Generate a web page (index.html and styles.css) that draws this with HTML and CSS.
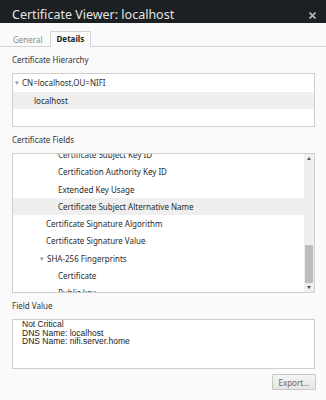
FILE: index.html
```html
<!DOCTYPE html>
<html>
<head>
<meta charset="utf-8">
<link rel="stylesheet" href="styles.css">
</head>
<body>
<div class="dialog">
  <div class="titlebar">
    <span class="title">Certificate Viewer: localhost</span>
    <span class="close">
      <svg width="7" height="7" viewBox="0 0 7 7"><path d="M0.5 0.5 L6.5 6.5 M6.5 0.5 L0.5 6.5" stroke="#b8b8b8" stroke-width="1.6"/></svg>
    </span>
  </div>
  <div class="tabs">
    <span class="tab">General</span>
    <span class="tab active">Details</span>
  </div>
  <div class="content">
    <div class="label">Certificate Hierarchy</div>
    <div class="box hierarchy">
      <div class="row"><span class="tri">▾</span>CN=localhost,OU=NIFI</div>
      <div class="row sel ind2">localhost</div>
    </div>
    <div class="label">Certificate Fields</div>
    <div class="box fields">
      <div class="list">
        <div class="inner">
          <div class="row ind3 cut">Certificate Subject Key ID</div>
          <div class="row ind3">Certification Authority Key ID</div>
          <div class="row ind3">Extended Key Usage</div>
          <div class="row ind3 sel">Certificate Subject Alternative Name</div>
          <div class="row ind1">Certificate Signature Algorithm</div>
          <div class="row ind1">Certificate Signature Value</div>
          <div class="row ind0"><span class="tri">▾</span>SHA-256 Fingerprints</div>
          <div class="row ind3">Certificate</div>
          <div class="row ind3">Public key</div>
        </div>
      </div>
      <div class="scrollbar">
        <span class="arrow up"></span>
        <span class="track"><span class="thumb"></span></span>
        <span class="arrow down"></span>
      </div>
    </div>
    <div class="label">Field Value</div>
    <div class="box value">Not Critical
DNS Name: localhost
DNS Name: nifi.server.home</div>
    <div class="actions"><button class="btn">Export...</button></div>
  </div>
</div>
</body>
</html>
```
FILE: styles.css
```css
html, body {
  margin: 0;
  padding: 0;
}
body {
  width: 326px;
  height: 400px;
  background: #fafafa;
  font-family: "Noto Sans", "Open Sans", sans-serif;
  color: #222;
  overflow: hidden;
}
.dialog {
  display: flex;
  flex-direction: column;
  height: 400px;
}
.titlebar {
  height: 23px;
  background: #1c2023;
  display: flex;
  align-items: flex-end;
  justify-content: space-between;
  padding: 0 12px;
  box-sizing: border-box;
  flex: none;
}
.title {
  color: #e4e4e4;
  font-size: 12.5px;
  line-height: 14px;
  padding-bottom: 1px;
}
.close {
  display: flex;
  padding-bottom: 4px;
  margin-right: -2px;
}
.tabs {
  height: 24px;
  box-sizing: border-box;
  border-bottom: 1px solid #d4d4d4;
  display: flex;
  align-items: flex-end;
  padding-left: 6px;
  flex: none;
}
.tab {
  font-size: 8px;
  color: #8a8a8a;
  padding: 0 6px;
  height: 14px;
  line-height: 14px;
  border: 1px solid transparent;
  border-bottom: none;
  margin-bottom: -1px;
  background: transparent;
}
.tab.active {
  color: #222;
  font-weight: bold;
  background: #fafafa;
  border-color: #d4d4d4;
  height: 15px;
}
.content {
  padding: 0 11px 0 12px;
  display: flex;
  flex-direction: column;
}
.label {
  font-size: 8px;
  line-height: 10px;
  color: #333;
  margin-top: 8px;
  margin-bottom: 8px;
}
.box {
  background: #fff;
  border: 1px solid #cfcfcf;
}
.row {
  font-size: 8px;
  height: 17.3px;
  line-height: 17.3px;
  white-space: nowrap;
  color: #2a2a2a;
  padding-left: 9px;
  display: flex;
  align-items: center;
}
.row.sel {
  background: #efefef;
}
.tri {
  font-size: 7px;
  color: #999;
  width: 7px;
  margin-left: -7px;
  margin-right: 0;
}
.hierarchy {
  height: 52px;
}
.hierarchy .row {
  height: 17.5px;
  line-height: 17.5px;
}
.hierarchy .row:first-child {
  padding-left: 9px;
}
.hierarchy .ind2 {
  padding-left: 21px;
}
.fields {
  height: 138px;
  display: flex;
  overflow: hidden;
}
.list {
  flex: 1;
  overflow: hidden;
}
.inner {
  margin-top: -8px;
}
.ind0 { padding-left: 34px; }
.ind1 { padding-left: 33px; }
.ind3 { padding-left: 45px; }
.scrollbar {
  width: 10px;
  background: #efefef;
  display: flex;
  flex-direction: column;
  align-items: center;
}
.arrow {
  width: 0;
  height: 0;
  border-left: 2.5px solid transparent;
  border-right: 2.5px solid transparent;
  margin: 3px 0;
}
.arrow.up {
  border-bottom: 3px solid #555;
}
.arrow.down {
  border-top: 3px solid #555;
}
.track {
  flex: 1;
  width: 100%;
  display: flex;
  flex-direction: column;
  justify-content: flex-end;
  padding: 0 1px;
  box-sizing: border-box;
}
.thumb {
  height: 38px;
  background: #bdbdbd;
}
.value {
  height: 50px;
  font-family: "Liberation Sans", Arial, sans-serif;
  font-size: 8.5px;
  line-height: 8.5px;
  white-space: pre;
  padding: 0 9px;
  box-sizing: border-box;
  color: #222;
}
.actions {
  display: flex;
  justify-content: flex-end;
  margin-top: 5px;
}
.btn {
  font-family: "Noto Sans", sans-serif;
  font-size: 8px;
  color: #666;
  height: 16px;
  width: 44px;
  padding: 0;
  border: 1px solid #c8c8c8;
  border-radius: 1px;
  background: linear-gradient(#f4f4f4, #e6e6e6);
  margin-right: -1px;
}
```
